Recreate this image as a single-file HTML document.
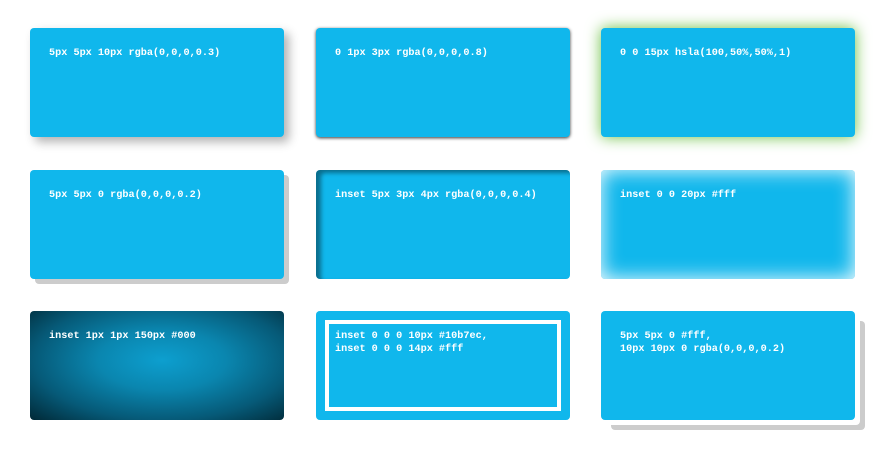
<!DOCTYPE html>
<html><head><style>
html,body{margin:0;background:#fff;width:890px;height:454px;overflow:hidden}
.b{position:absolute;width:254px;height:109px;background:#10b7ec;border-radius:4px;box-sizing:border-box;padding:19px 19px;color:#fff;font:bold 10.2px/13px "Liberation Mono",monospace;white-space:pre}
</style></head><body>
<div class="b" style="left:30px;top:28px;box-shadow:5px 5px 10px rgba(0,0,0,0.3)">5px 5px 10px rgba(0,0,0,0.3)</div>
<div class="b" style="left:316px;top:28px;box-shadow:0 1px 3px rgba(0,0,0,0.8)">0 1px 3px rgba(0,0,0,0.8)</div>
<div class="b" style="left:601px;top:28px;box-shadow:0 0 15px hsla(100,50%,50%,1)">0 0 15px hsla(100,50%,50%,1)</div>
<div class="b" style="left:30px;top:170px;box-shadow:5px 5px 0 rgba(0,0,0,0.2)">5px 5px 0 rgba(0,0,0,0.2)</div>
<div class="b" style="left:316px;top:170px;box-shadow:inset 5px 3px 4px rgba(0,0,0,0.4)">inset 5px 3px 4px rgba(0,0,0,0.4)</div>
<div class="b" style="left:601px;top:170px;box-shadow:inset 0 0 20px #fff">inset 0 0 20px #fff</div>
<div class="b" style="left:30px;top:311px;background:radial-gradient(ellipse 72% 78% at 52% 45%,#0d9fcf 0%,#0a86af 35%,#065a78 70%,#012a38 100%)">inset 1px 1px 150px #000</div>
<div class="b" style="left:316px;top:311px;box-shadow:inset 0 0 0 9px #10b7ec,inset 0 0 0 13px #fff">inset 0 0 0 10px #10b7ec,
inset 0 0 0 14px #fff</div>
<div class="b" style="left:601px;top:311px;box-shadow:5px 5px 0 #fff,10px 10px 0 rgba(0,0,0,0.2)">5px 5px 0 #fff,
10px 10px 0 rgba(0,0,0,0.2)</div>
</body></html>
